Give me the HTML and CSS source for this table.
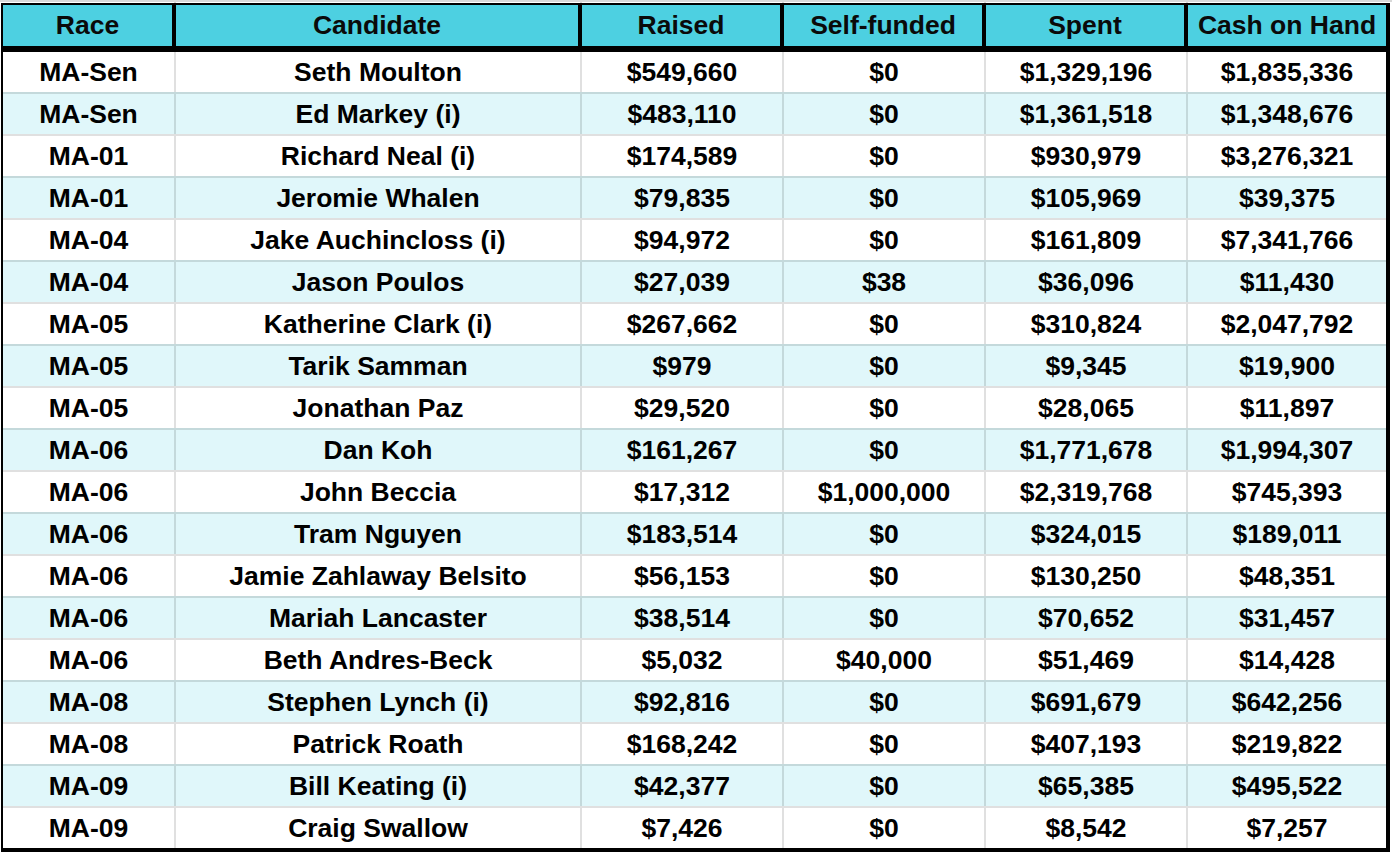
FILE: index.html
```html
<!DOCTYPE html>
<html lang="en">
<head>
<meta charset="utf-8">
<title>MA Fundraising</title>
<link rel="stylesheet" href="styles.css">
</head>
<body>
<div class="sheet">
  <div class="edge"><span></span><span></span><span></span><span></span><span></span><span></span></div>
  <div class="table">
    <div class="row head">
      <div class="cell">Race</div><div class="cell">Candidate</div><div class="cell">Raised</div><div class="cell">Self-funded</div><div class="cell">Spent</div><div class="cell">Cash on Hand</div>
    </div>
    <div class="row data"><div class="cell">MA-Sen</div><div class="cell">Seth Moulton</div><div class="cell">$549,660</div><div class="cell">$0</div><div class="cell">$1,329,196</div><div class="cell">$1,835,336</div></div>
    <div class="row data alt"><div class="cell">MA-Sen</div><div class="cell">Ed Markey (i)</div><div class="cell">$483,110</div><div class="cell">$0</div><div class="cell">$1,361,518</div><div class="cell">$1,348,676</div></div>
    <div class="row data"><div class="cell">MA-01</div><div class="cell">Richard Neal (i)</div><div class="cell">$174,589</div><div class="cell">$0</div><div class="cell">$930,979</div><div class="cell">$3,276,321</div></div>
    <div class="row data alt"><div class="cell">MA-01</div><div class="cell">Jeromie Whalen</div><div class="cell">$79,835</div><div class="cell">$0</div><div class="cell">$105,969</div><div class="cell">$39,375</div></div>
    <div class="row data"><div class="cell">MA-04</div><div class="cell">Jake Auchincloss (i)</div><div class="cell">$94,972</div><div class="cell">$0</div><div class="cell">$161,809</div><div class="cell">$7,341,766</div></div>
    <div class="row data alt"><div class="cell">MA-04</div><div class="cell">Jason Poulos</div><div class="cell">$27,039</div><div class="cell">$38</div><div class="cell">$36,096</div><div class="cell">$11,430</div></div>
    <div class="row data"><div class="cell">MA-05</div><div class="cell">Katherine Clark (i)</div><div class="cell">$267,662</div><div class="cell">$0</div><div class="cell">$310,824</div><div class="cell">$2,047,792</div></div>
    <div class="row data alt"><div class="cell">MA-05</div><div class="cell">Tarik Samman</div><div class="cell">$979</div><div class="cell">$0</div><div class="cell">$9,345</div><div class="cell">$19,900</div></div>
    <div class="row data"><div class="cell">MA-05</div><div class="cell">Jonathan Paz</div><div class="cell">$29,520</div><div class="cell">$0</div><div class="cell">$28,065</div><div class="cell">$11,897</div></div>
    <div class="row data alt"><div class="cell">MA-06</div><div class="cell">Dan Koh</div><div class="cell">$161,267</div><div class="cell">$0</div><div class="cell">$1,771,678</div><div class="cell">$1,994,307</div></div>
    <div class="row data"><div class="cell">MA-06</div><div class="cell">John Beccia</div><div class="cell">$17,312</div><div class="cell">$1,000,000</div><div class="cell">$2,319,768</div><div class="cell">$745,393</div></div>
    <div class="row data alt"><div class="cell">MA-06</div><div class="cell">Tram Nguyen</div><div class="cell">$183,514</div><div class="cell">$0</div><div class="cell">$324,015</div><div class="cell">$189,011</div></div>
    <div class="row data"><div class="cell">MA-06</div><div class="cell">Jamie Zahlaway Belsito</div><div class="cell">$56,153</div><div class="cell">$0</div><div class="cell">$130,250</div><div class="cell">$48,351</div></div>
    <div class="row data alt"><div class="cell">MA-06</div><div class="cell">Mariah Lancaster</div><div class="cell">$38,514</div><div class="cell">$0</div><div class="cell">$70,652</div><div class="cell">$31,457</div></div>
    <div class="row data"><div class="cell">MA-06</div><div class="cell">Beth Andres-Beck</div><div class="cell">$5,032</div><div class="cell">$40,000</div><div class="cell">$51,469</div><div class="cell">$14,428</div></div>
    <div class="row data alt"><div class="cell">MA-08</div><div class="cell">Stephen Lynch (i)</div><div class="cell">$92,816</div><div class="cell">$0</div><div class="cell">$691,679</div><div class="cell">$642,256</div></div>
    <div class="row data"><div class="cell">MA-08</div><div class="cell">Patrick Roath</div><div class="cell">$168,242</div><div class="cell">$0</div><div class="cell">$407,193</div><div class="cell">$219,822</div></div>
    <div class="row data alt"><div class="cell">MA-09</div><div class="cell">Bill Keating (i)</div><div class="cell">$42,377</div><div class="cell">$0</div><div class="cell">$65,385</div><div class="cell">$495,522</div></div>
    <div class="row data"><div class="cell">MA-09</div><div class="cell">Craig Swallow</div><div class="cell">$7,426</div><div class="cell">$0</div><div class="cell">$8,542</div><div class="cell">$7,257</div></div>
  </div>
</div>
</body>
</html>
```

FILE: styles.css
```css
* {
  box-sizing: border-box;
}

html, body {
  margin: 0;
  padding: 0;
  background: #ffffff;
}

body {
  font-family: "Liberation Sans", Arial, sans-serif;
  color: #000000;
}

.sheet {
  width: 1392px;
  height: 852px;
  overflow: hidden;
  border-top: 2px solid #d9d9d9;
}

.edge {
  display: grid;
  grid-template-columns: 171px 406px 202px 202px 202px 200px;
  height: 1px;
  margin-left: 3px;
}

.edge span + span {
  border-left: 2px solid #dadada;
}

.table {
  margin-left: 1px;
  width: 1389px;
  border-style: solid;
  border-color: #000000;
  border-width: 2px 4px 4px 2px;
}

.row {
  display: grid;
  grid-template-columns: 171px 406px 202px 202px 202px 200px;
}

.cell {
  display: flex;
  align-items: center;
  justify-content: center;
  font-weight: bold;
  font-size: 26.5px;
  white-space: nowrap;
}

.cell + .cell {
  border-left: 2px solid rgba(0, 0, 0, 0.12);
}

.head {
  background: #4dd0e1;
  border-bottom: 6px solid #000000;
}

.head .cell {
  height: 41px;
  color: #0a0a0a;
}

.head .cell + .cell {
  border-left-color: #000000;
}

.head .cell:not(:last-child) {
  border-right: 2px solid #000000;
}

.data {
  background: #ffffff;
}

.data .cell {
  height: 40px;
}

.data + .data {
  border-top: 2px solid rgba(0, 0, 0, 0.12);
}

.data.alt {
  background: #e0f7fa;
}
```
